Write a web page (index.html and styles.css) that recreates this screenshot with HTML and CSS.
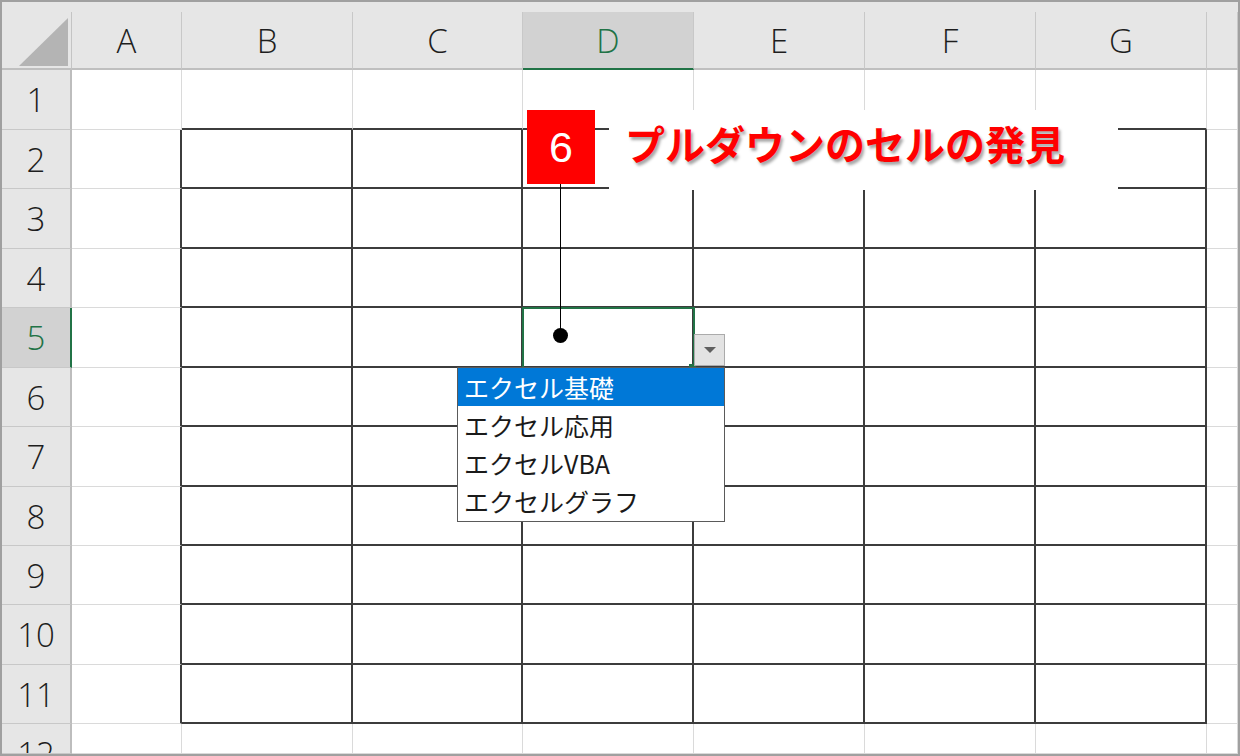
FILE: index.html
```html
<!DOCTYPE html>
<html lang="ja">
<head>
    <meta charset="UTF-8">
    <title>プルダウンのセルの発見</title>
    <link rel="stylesheet" href="styles.css">
</head>
<body>

    <div class="sheet">
        <div class="grid">
            <!-- column headers -->
            <div class="corner"><span class="tri"></span></div>
            <div class="ch">A</div>
            <div class="ch">B</div>
            <div class="ch">C</div>
            <div class="ch sel">D</div>
            <div class="ch">E</div>
            <div class="ch">F</div>
            <div class="ch">G</div>
            <div class="ch"></div>

            <!-- row 1 -->
            <div class="rh"><span>1</span></div>
            <div class="c"></div>
            <div class="c top"></div><div class="c top"></div><div class="c top"></div>
            <div class="c top"></div><div class="c top"></div><div class="c top"></div>
            <div class="c"></div>

            <!-- rows 2 - 11: the bordered table -->
            <div class="rh"><span>2</span></div>
            <div class="c edge"></div>
            <div class="c t"></div><div class="c t"></div><div class="c t"></div>
            <div class="c t"></div><div class="c t"></div><div class="c t"></div>
            <div class="c"></div>

            <div class="rh"><span>3</span></div>
            <div class="c edge"></div>
            <div class="c t"></div><div class="c t"></div><div class="c t"></div>
            <div class="c t"></div><div class="c t"></div><div class="c t"></div>
            <div class="c"></div>

            <div class="rh"><span>4</span></div>
            <div class="c edge"></div>
            <div class="c t"></div><div class="c t"></div><div class="c t"></div>
            <div class="c t"></div><div class="c t"></div><div class="c t"></div>
            <div class="c"></div>

            <div class="rh sel"><span>5</span></div>
            <div class="c edge"></div>
            <div class="c t"></div><div class="c t"></div><div class="c t"></div>
            <div class="c t"></div><div class="c t"></div><div class="c t"></div>
            <div class="c"></div>

            <div class="rh"><span>6</span></div>
            <div class="c edge"></div>
            <div class="c t"></div><div class="c t"></div><div class="c t"></div>
            <div class="c t"></div><div class="c t"></div><div class="c t"></div>
            <div class="c"></div>

            <div class="rh"><span>7</span></div>
            <div class="c edge"></div>
            <div class="c t"></div><div class="c t"></div><div class="c t"></div>
            <div class="c t"></div><div class="c t"></div><div class="c t"></div>
            <div class="c"></div>

            <div class="rh"><span>8</span></div>
            <div class="c edge"></div>
            <div class="c t"></div><div class="c t"></div><div class="c t"></div>
            <div class="c t"></div><div class="c t"></div><div class="c t"></div>
            <div class="c"></div>

            <div class="rh"><span>9</span></div>
            <div class="c edge"></div>
            <div class="c t"></div><div class="c t"></div><div class="c t"></div>
            <div class="c t"></div><div class="c t"></div><div class="c t"></div>
            <div class="c"></div>

            <div class="rh"><span>10</span></div>
            <div class="c edge"></div>
            <div class="c t"></div><div class="c t"></div><div class="c t"></div>
            <div class="c t"></div><div class="c t"></div><div class="c t"></div>
            <div class="c"></div>

            <div class="rh"><span>11</span></div>
            <div class="c edge"></div>
            <div class="c t"></div><div class="c t"></div><div class="c t"></div>
            <div class="c t"></div><div class="c t"></div><div class="c t"></div>
            <div class="c"></div>

            <!-- row 12, cut off by the window -->
            <div class="rh"><span>12</span></div>
            <div class="c"></div>
            <div class="c"></div><div class="c"></div><div class="c"></div>
            <div class="c"></div><div class="c"></div><div class="c"></div>
            <div class="c"></div>
        </div>

        <!-- selected cell D5 with its dropdown -->
        <div class="active"></div>
        <div class="handle"></div>
        <div class="drop-btn"><span class="arrow"></span></div>
        <ul class="list">
            <li class="hl">エクセル基礎</li>
            <li>エクセル応用</li>
            <li>エクセルVBA</li>
            <li>エクセルグラフ</li>
        </ul>

        <!-- callout -->
        <div class="pointer"></div>
        <div class="dot"></div>
        <div class="badge">6</div>
        <div class="label">プルダウンのセルの発見</div>
    </div>

</body>
</html>
```

FILE: styles.css
```css
body {
    margin: 0;
    background: #fff;
    font-family: "Open Sans", "Noto Sans", "Noto Sans CJK JP", sans-serif;
}

.sheet {
    position: relative;
    width: 1240px;
    height: 756px;
    box-sizing: border-box;
    border: 2px solid #a0a0a0;
    overflow: hidden;
    background: #fff;
}

.grid {
    display: grid;
    grid-template-columns: 70px 110px 171px 170px 171px 171px 171px 171px 1fr;
    grid-template-rows: 58px 60px 59px 60px 59px 60px 59px 60px 59px 59px 60px 59px 1fr;
    height: 100%;
    box-sizing: border-box;
    padding-top: 10px;
    background: #e6e6e6;
}

/* headers */
.corner {
    position: relative;
    border-right: 1px solid #c4c4c4;
    border-bottom: 2px solid #bfbfbf;
}

.tri {
    position: absolute;
    left: 17px;
    top: 6px;
    width: 0;
    height: 0;
    border-left: 49px solid transparent;
    border-bottom: 48px solid #b4b4b4;
}

.ch {
    border-right: 1px solid #c8c8c8;
    border-bottom: 2px solid #bfbfbf;
    font-size: 33px;
    font-weight: 300;
    color: #1e1e1e;
    display: flex;
    align-items: center;
    justify-content: center;
}

.ch.sel {
    background: #d2d2d2;
    color: #217346;
    border-bottom-color: #217346;
}

.rh {
    border-right: 2px solid #bdbdbd;
    border-bottom: 1px solid #c8c8c8;
    font-size: 33px;
    font-weight: 300;
    color: #1e1e1e;
    text-align: center;
    overflow: hidden;
}

.rh span {
    display: block;
    line-height: 60px;
}

.rh.sel {
    background: #d2d2d2;
    color: #217346;
    border-right-color: #217346;
}

/* cells */
.c {
    background: #fff;
    border-right: 1px solid #dadada;
    border-bottom: 1px solid #dadada;
}

.c.top {
    border-bottom: 2px solid #3c3c3c;
}

.c.edge {
    border-right: 2px solid #3c3c3c;
}

.c.t {
    border-right: 2px solid #3c3c3c;
    border-bottom: 2px solid #3c3c3c;
}

/* active cell and dropdown */
.active {
    position: absolute;
    left: 520px;
    top: 305px;
    width: 173px;
    height: 62px;
    box-sizing: border-box;
    border: 2px solid #217346;
}

.handle {
    position: absolute;
    left: 687px;
    top: 362px;
    width: 7px;
    height: 6px;
    background: #217346;
}

.drop-btn {
    position: absolute;
    left: 692px;
    top: 332px;
    width: 31px;
    height: 32px;
    box-sizing: border-box;
    background: #e3e3e3;
    border: 1px solid #ababab;
    display: flex;
    align-items: center;
    justify-content: center;
}

.arrow {
    width: 0;
    height: 0;
    border-left: 6px solid transparent;
    border-right: 6px solid transparent;
    border-top: 6px solid #5f5f5f;
}

.list {
    position: absolute;
    left: 455px;
    top: 365px;
    width: 268px;
    height: 155px;
    box-sizing: border-box;
    margin: 0;
    padding: 0;
    list-style: none;
    background: #fff;
    border: 1px solid #5a5a5a;
    font-family: "Noto Sans CJK JP", sans-serif;
    font-size: 25px;
    color: #1a1a1a;
}

.list li {
    height: 38px;
    line-height: 38px;
    padding-left: 6px;
}

.list li.hl {
    background: #0078d7;
    color: #fff;
}

/* callout */
.pointer {
    position: absolute;
    left: 558px;
    top: 180px;
    width: 1px;
    height: 153px;
    background: #000;
}

.dot {
    position: absolute;
    left: 551px;
    top: 326px;
    width: 15px;
    height: 15px;
    border-radius: 50%;
    background: #000;
}

.badge {
    position: absolute;
    left: 525px;
    top: 108px;
    width: 68px;
    height: 74px;
    background: #ff0000;
    color: #fff;
    font-family: "Liberation Sans", sans-serif;
    font-size: 43px;
    display: flex;
    align-items: center;
    justify-content: center;
}

.label {
    position: absolute;
    left: 607px;
    top: 108px;
    width: 509px;
    height: 80px;
    box-sizing: border-box;
    padding-left: 16px;
    background: #fff;
    color: #ff0000;
    font-family: "Noto Sans CJK JP", sans-serif;
    font-weight: bold;
    font-size: 40px;
    line-height: 66px;
    text-shadow: 2px 3px 3px rgba(0, 0, 0, 0.35);
}
```
